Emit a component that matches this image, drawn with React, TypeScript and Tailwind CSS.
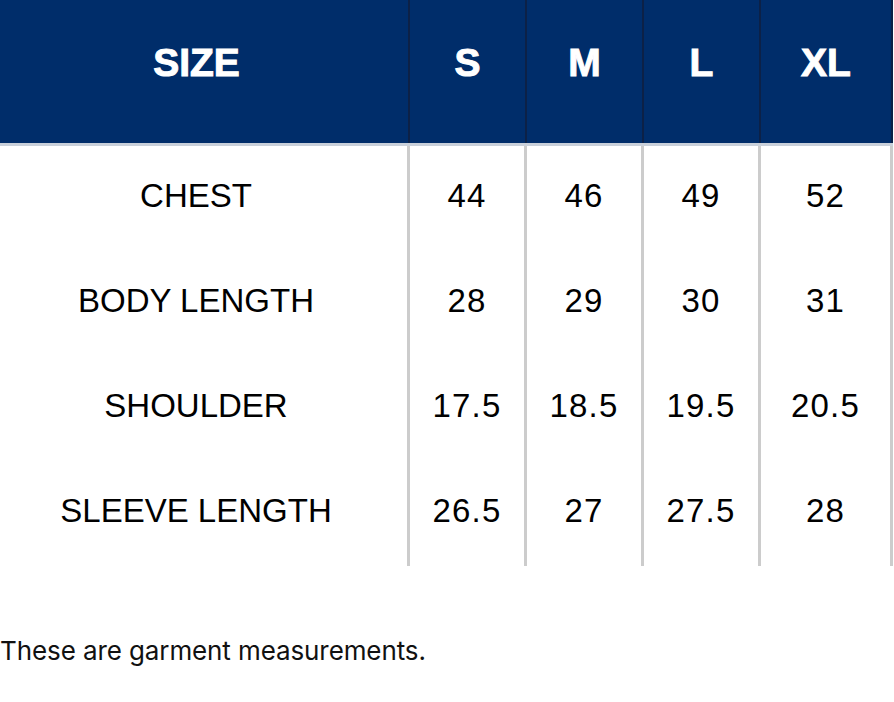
import React from "react";

const sizes = ["S", "M", "L", "XL"];
const rows: [string, string[]][] = [
  ["CHEST", ["44", "46", "49", "52"]],
  ["BODY LENGTH", ["28", "29", "30", "31"]],
  ["SHOULDER", ["17.5", "18.5", "19.5", "20.5"]],
  ["SLEEVE LENGTH", ["26.5", "27", "27.5", "28"]],
];

const colW = ["w-[117px]", "w-[117px]", "w-[117px]", "w-[132px]"];

export default function App() {
  return (
    <div className="w-[894px] h-[702px] bg-white overflow-hidden" style={{ fontFamily: '"Liberation Sans", Arial, sans-serif' }}>
      <div className="w-[893px]">
        {/* header */}
        <div className="flex h-[146px] bg-[#002d6a] border-b-[3px] border-[#c9d0da] text-white font-black text-[39px] [-webkit-text-stroke:1px_white]">
          <div className="w-[410px] pr-[15px] pb-[16px] border-r-[2px] border-[#0c2147] flex items-center justify-center">
            SIZE
          </div>
          {sizes.map((s, i) => (
            <div key={s} className={`${colW[i]} pb-[16px] border-r-[2px] border-[#0c2147] flex items-center justify-center`}>
              {s}
            </div>
          ))}
        </div>
        {/* body */}
        {rows.map(([label, vals]) => (
          <div key={label} className="flex h-[105px] text-[33px] text-black">
            <div className="w-[410px] pr-[15px] pb-[5px] border-r-[3px] border-[#cccccc] flex items-center justify-center">
              {label}
            </div>
            {vals.map((v, i) => (
              <div key={i} className={`${colW[i]} pb-[5px] tracking-[1.2px] border-r-[3px] border-[#cccccc] flex items-center justify-center`}>
                {v}
              </div>
            ))}
          </div>
        ))}
      </div>
      <div className="mt-[72px] text-[26px] tracking-[-0.1px] text-[#111] leading-none" style={{ fontFamily: 'Inter, "Noto Sans", sans-serif' }}>
        These are garment measurements.
      </div>
    </div>
  );
}
